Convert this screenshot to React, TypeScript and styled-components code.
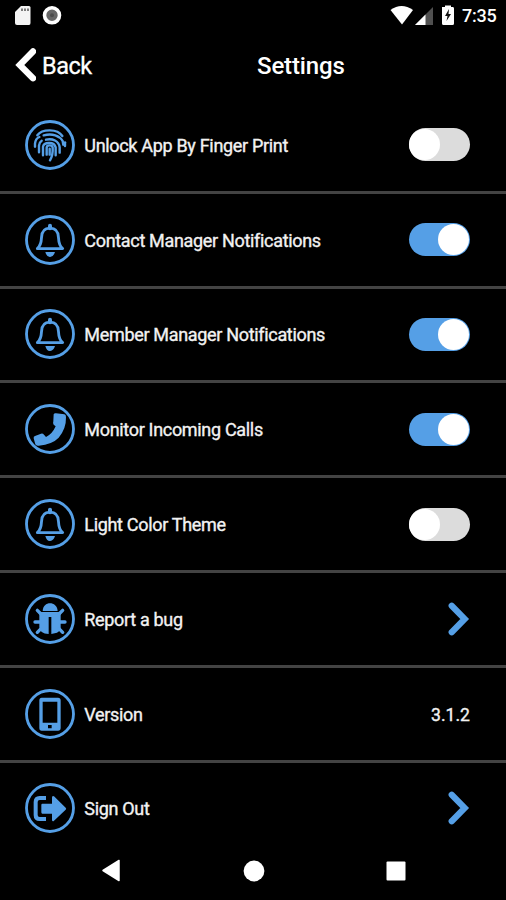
import React, { useState } from 'react';
import styled, { createGlobalStyle } from 'styled-components';

const BLUE = '#559fe6';

const GlobalStyle = createGlobalStyle`
  * { box-sizing: border-box; }
  body { margin: 0; background: #000; }
`;

const Screen = styled.div`
  width: 506px;
  height: 900px;
  display: flex;
  flex-direction: column;
  overflow: hidden;
  background: #000;
  color: #f2f2f2;
  font-family: Roboto, 'Liberation Sans', sans-serif;
`;

const StatusBar = styled.div`
  flex: none;
  height: 32px;
  display: flex;
  justify-content: space-between;
  padding: 0 9px 0 14px;
`;

const StatusGroup = styled.div`
  display: flex;
  align-items: center;
`;

const Clock = styled.span`
  width: 35px;
  margin-left: 8px;
  font-size: 18px;
  font-weight: 500;
  line-height: 32px;
  letter-spacing: -0.2px;
  white-space: nowrap;
  color: #fff;
`;

const Header = styled.header`
  flex: none;
  height: 67px;
  display: flex;
  padding: 0 10px 0 15px;
  color: #fff;
`;

const BackButton = styled.button`
  flex: none;
  width: 242px;
  display: flex;
  align-items: flex-start;
  gap: 6px;
  padding: 16px 0 0;
  border: 0;
  background: none;
  color: inherit;
  font: 400 23.5px/36px Roboto, sans-serif;
  letter-spacing: -0.5px;
  -webkit-text-stroke: 0.3px currentColor;
`;

const Title = styled.h1`
  margin: 0;
  padding-top: 16px;
  white-space: nowrap;
  font-size: 24px;
  font-weight: 500;
  line-height: 36px;
  letter-spacing: -0.15px;
`;

const List = styled.main`
  flex: none;
  height: 751px;
`;

const Row = styled.div<{ $last?: boolean }>`
  height: 94.8px;
  display: flex;
  align-items: center;
  padding: 0 36px 0 25px;
  border-bottom: 3px solid ${(p) => (p.$last ? 'transparent' : '#434343')};
`;

const Label = styled.span`
  flex: 1;
  margin-left: 9.3px;
  padding-top: 2px;
  font-size: 18px;
  line-height: 24px;
  letter-spacing: -0.32px;
  white-space: nowrap;
  -webkit-text-stroke: 0.35px currentColor;
`;

const Value = styled.span`
  padding-top: 2px;
  font-size: 17.6px;
  line-height: 24px;
  -webkit-text-stroke: 0.35px currentColor;
`;

const Switch = styled.button<{ $on: boolean }>`
  width: 61px;
  height: 33px;
  display: flex;
  align-items: center;
  justify-content: ${(p) => (p.$on ? 'flex-end' : 'flex-start')};
  padding: 0 ${(p) => (p.$on ? '1px' : '0')};
  border: 0;
  border-radius: 17px;
  background: ${(p) => (p.$on ? BLUE : '#dcdcdc')};
`;

const Knob = styled.span`
  width: 31px;
  height: 31px;
  border-radius: 50%;
  background: #fff;
`;

const NavBar = styled.nav`
  flex: 1;
  display: flex;
  align-items: flex-start;
  justify-content: space-between;
  padding: 9px 100px 0 101px;
`;

type IconKind = 'finger' | 'bell' | 'phone' | 'bug' | 'mobile' | 'exit';

const stroke = { fill: 'none', stroke: BLUE, strokeLinecap: 'round', strokeLinejoin: 'round' } as const;

const glyphs: Record<IconKind, React.ReactNode> = {
  finger: (
    <g {...stroke} strokeWidth="7.2">
      <path d="M37 46C52 26 97 26 112 48" />
      <path d="M30 80V71C31 61 36 54 43 51M56 46C82 39 104 47 113 63L115 74" />
      <path d="M120 67V78" />
      <path d="M42 97V77C43 69 45 65 50 62M63 59C82 54 102 63 104 82V98" />
      <path d="M54 106V80C56 67 87 63 92 82V106" />
      <path d="M65 104V83C66 74 82 74 83 83C84 99 80 113 75 121" />
      <path d="M74 86V104" />
    </g>
  ),
  bell: (
    <>
      <path d="M37 101C47 92 49 81 49.500 68C50 50 58 39.500 75 39.500S100 50 100.500 68C101 81 103 92 113 101Z" {...stroke} strokeWidth="8.500" />
      <path d="M75 40V32" {...stroke} strokeWidth="12" />
      <path d="M61 111H90Q86 125 75.500 126T61 111Z" fill={BLUE} />
    </>
  ),
  phone: (
    <path
      d="M86 31Q88 27 93 28L118 31Q123 32 123 39Q124 74 101 101Q82 121 41 125Q33 126 31 121L26 103Q25 97 30 96L48 89Q53 87 57 92L63 99Q82 90 92 67L86 62Q83 58 85 52Z"
      fill={BLUE}
    />
  ),
  bug: (
    <>
      <path d="M53 51C54 20 96 20 98 51Z" fill={BLUE} />
      <path d="M43 54H107V101Q105 112 96 116L79 120V69H71V120Q44 119 43 99Z" fill={BLUE} />
      <path d="M37 49L48 60M113 49L102 60M30 84H46M104 84H120M48 104L37 115M102 104L113 115" {...stroke} strokeWidth="10" />
    </>
  ),
  mobile: (
    <path
      fillRule="evenodd"
      d="M50 26H99Q107 26 107 34V117Q107 125 99 125H50Q43 125 43 117V34Q43 26 50 26ZM53 38V101H97V38ZM69 108V118H80V108Z"
      fill={BLUE}
    />
  ),
  exit: (
    <>
      <path d="M57 45H44Q32 45 32 57V96Q32 108 44 108H57" fill="none" stroke={BLUE} strokeWidth="12" strokeLinecap="square" />
      <path d="M52 62Q49 62 49 66V88Q49 92 52 92H81V112Q83 117 87 113L122 80Q125 77 122 74L87 40Q81 37 81 44V62Z" fill={BLUE} />
    </>
  ),
};

const RoundIcon = ({ kind }: { kind: IconKind }) => (
  <svg width="50" height="50" viewBox="0 0 150 150">
    <circle cx="75" cy="75" r="70.500" fill="none" stroke={BLUE} strokeWidth="8.500" />
    {glyphs[kind]}
  </svg>
);

const Chevron = () => (
  <svg width="22" height="34" viewBox="0 0 22 34">
    <path d="M3.7 3.800L16.700 17L3.700 30.200" fill="none" stroke={BLUE} strokeWidth="6.200" strokeLinecap="round" />
  </svg>
);

const SwitchControl = ({ initial }: { initial: boolean }) => {
  const [on, setOn] = useState(initial);
  return (
    <Switch $on={on} role="switch" aria-checked={on} onClick={() => setOn(!on)}>
      <Knob />
    </Switch>
  );
};

interface Item {
  icon: IconKind;
  label: string;
  control: React.ReactNode;
}

const items: Item[] = [
  { icon: 'finger', label: 'Unlock App By Finger Print', control: <SwitchControl initial={false} /> },
  { icon: 'bell', label: 'Contact Manager Notifications', control: <SwitchControl initial /> },
  { icon: 'bell', label: 'Member Manager Notifications', control: <SwitchControl initial /> },
  { icon: 'phone', label: 'Monitor Incoming Calls', control: <SwitchControl initial /> },
  { icon: 'bell', label: 'Light Color Theme', control: <SwitchControl initial={false} /> },
  { icon: 'bug', label: 'Report a bug', control: <Chevron /> },
  { icon: 'mobile', label: 'Version', control: <Value>3.1.2</Value> },
  { icon: 'exit', label: 'Sign Out', control: <Chevron /> },
];

export default function App() {
  return (
    <Screen>
      <GlobalStyle />
      <StatusBar>
        <StatusGroup>
          <svg width="50" height="32" viewBox="0 0 50 32">
            <path d="M7 6H15Q16.5 6 16.5 7.5V23Q16.5 25 15 25H3Q1 25 1 23V12Z" fill="#f4f4f4" />
            <path d="M8 8.5V11M11 8.5V11M14 8.5V11" stroke="#555" strokeWidth="1.5" />
            <circle cx="38" cy="15.3" r="7.5" fill="#666" stroke="#fff" strokeWidth="3.6" />
            <circle cx="38" cy="15.3" r="2" fill="#4c4c4c" />
          </svg>
        </StatusGroup>
        <StatusGroup>
          <svg width="64" height="32" viewBox="390 0 64 32">
            <path d="M390.5 10Q401.500 2 413 10L402 24.500Z" fill="#fff" />
            <path d="M433 7V25H415Z" fill="#505050" />
            <path d="M425.500 14.500V25H415Z" fill="#fff" />
            <path d="M442 7H445V5.500H451V7H453Q454 7 454 8.500V23.500Q454 25 452.500 25H443.500Q442 25 442 23.500Z" fill="#fff" />
            <path d="M449 9L445 16H447.500L446.500 21L451 14H448.500Z" fill="#111" />
          </svg>
          <Clock>7:35</Clock>
        </StatusGroup>
      </StatusBar>
      <Header>
        <BackButton>
          <svg width="21" height="34" viewBox="0 0 21 34">
            <path d="M18 3.500L4.800 17L18 30.200" fill="none" stroke="#fff" strokeWidth="6.400" strokeLinecap="round" />
          </svg>
          Back
        </BackButton>
        <Title>Settings</Title>
      </Header>
      <List>
        {items.map((item, i) => (
          <Row key={item.label} $last={i === items.length - 1}>
            <RoundIcon kind={item.icon} />
            <Label>{item.label}</Label>
            {item.control}
          </Row>
        ))}
      </List>
      <NavBar>
        <svg width="20" height="23" viewBox="0 0 20 23">
          <path d="M18 1.500V21.500L2 11.500Z" fill="#fff" stroke="#fff" strokeWidth="1.500" strokeLinejoin="round" />
        </svg>
        <svg width="22" height="23" viewBox="0 0 22 23">
          <circle cx="11" cy="12" r="10.400" fill="#fff" />
        </svg>
        <svg width="20" height="23" viewBox="0 0 20 23">
          <rect x="0.500" y="2.500" width="19" height="19" rx="1" fill="#fff" />
        </svg>
      </NavBar>
    </Screen>
  );
}
